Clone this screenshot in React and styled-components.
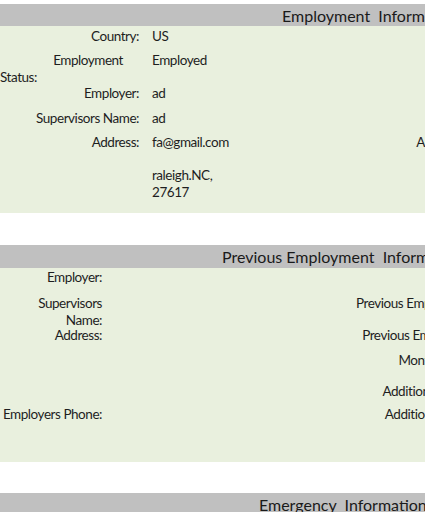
import React from 'react'
import styled, { createGlobalStyle } from 'styled-components'

const GlobalStyle = createGlobalStyle`
  html, body {
    margin: 0;
    padding: 0;
    background: #ffffff;
    overflow: hidden;
  }
  body {
    font-family: Lato, "Liberation Sans", sans-serif;
    color: #1e1e1e;
  }
`;

const Page = styled.div`
  width: 425px;
  overflow: hidden;
  padding-top: 4px;
`;

const Section = styled.section`
  width: 720px;
  margin-bottom: ${({ $gap }) => $gap || 0}px;
`;

const Header = styled.div`
  height: ${({ $h }) => $h || 22}px;
  background: #c0c0c0;
  display: flex;
  align-items: center;
  padding-left: ${({ $indent }) => $indent}px;
  font-size: 16px;
  white-space: pre;
  color: #1a1a1a;
`;

const Body = styled.div`
  background: #e9f0de;
  padding: ${({ $top }) => $top || 0}px 0 ${({ $bottom }) => $bottom || 0}px;
  font-size: 13.5px;
  letter-spacing: -0.45px;
  line-height: 16.5px;
  --label-w: ${({ $labelW }) => $labelW}px;
  --right-end: ${({ $rightEnd }) => $rightEnd}px;
`;

const Row = styled.div`
  display: grid;
  grid-template-columns: var(--label-w) 200px calc(var(--right-end) - var(--label-w) - 226px) 1fr;
  column-gap: 13px;
  height: ${({ $h }) => ($h ? `${$h}px` : 'auto')};
  align-items: start;
`;

const Label = styled.div`
  text-align: right;
  white-space: nowrap;
`;

const SplitLabel = styled.div`
  white-space: nowrap;
`;

const SplitLine = styled.div`
  text-align: ${({ $left }) => ($left ? 'left' : 'right')};
  padding-right: ${({ $pad }) => $pad || 0}px;
`;

const Value = styled.div`
  white-space: pre-line;
`;

const RightLabel = styled.div`
  text-align: right;
  white-space: nowrap;
`;

const App = () => (
  <Page>
    <GlobalStyle />

    <Section $gap={32}>
      <Header $indent={282}>{'Employment  Information'}</Header>
      <Body $labelW={139} $rightEnd={500} $top={2} $bottom={13}>
        <Row $h={24}>
          <Label>Country:</Label>
          <Value>US</Value>
        </Row>
        <Row $h={33}>
          <SplitLabel>
            <SplitLine $pad={16}>Employment</SplitLine>
            <SplitLine $left>Status:</SplitLine>
          </SplitLabel>
          <Value>Employed</Value>
        </Row>
        <Row $h={25}>
          <Label>Employer:</Label>
          <Value>ad</Value>
        </Row>
        <Row $h={24}>
          <Label>Supervisors Name:</Label>
          <Value>ad</Value>
        </Row>
        <Row>
          <Label>Address:</Label>
          <Value>{'fa@gmail.com\n\nraleigh.NC,\n27617'}</Value>
          <RightLabel>Address Line 2:</RightLabel>
        </Row>
      </Body>
    </Section>

    <Section $gap={31}>
      <Header $h={23} $indent={222}>{'Previous Employment  Information'}</Header>
      <Body $labelW={102} $rightEnd={526} $top={1} $bottom={32}>
        <Row $h={26}>
          <Label>Employer:</Label>
          <Value />
        </Row>
        <Row $h={32}>
          <Label>Supervisors<br />Name:</Label>
          <Value />
          <RightLabel>Previous Employment Address:</RightLabel>
        </Row>
        <Row $h={25}>
          <Label>Address:</Label>
          <Value />
          <RightLabel>Previous Employment Length:</RightLabel>
        </Row>
        <Row $h={31}>
          <Label />
          <Value />
          <RightLabel>Monthly Gross Income:</RightLabel>
        </Row>
        <Row $h={23}>
          <Label />
          <Value />
          <RightLabel>Additional Income Source:</RightLabel>
        </Row>
        <Row $h={24}>
          <Label>Employers Phone:</Label>
          <Value />
          <RightLabel>Additional Income Period:</RightLabel>
        </Row>
      </Body>
    </Section>

    <Section>
      <Header $indent={259}>{'Emergency  Information'}</Header>
      <Body $labelW={139} $rightEnd={500} $top={2} $bottom={20}>
        <Row $h={24}>
          <Label>Name:</Label>
          <Value />
        </Row>
      </Body>
    </Section>
  </Page>
);

export default App;
